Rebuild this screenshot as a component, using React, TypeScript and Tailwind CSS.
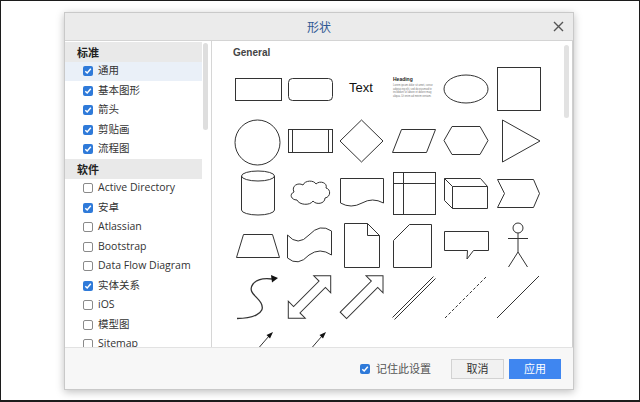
import React from 'react';

type Item = { label: string; checked?: boolean; header?: boolean; active?: boolean };

const items: Item[] = [
  { label: '标准', header: true },
  { label: '通用', checked: true, active: true },
  { label: '基本图形', checked: true },
  { label: '箭头', checked: true },
  { label: '剪贴画', checked: true },
  { label: '流程图', checked: true },
  { label: '软件', header: true },
  { label: 'Active Directory' },
  { label: '安卓', checked: true },
  { label: 'Atlassian' },
  { label: 'Bootstrap' },
  { label: 'Data Flow Diagram' },
  { label: '实体关系', checked: true },
  { label: 'iOS' },
  { label: '模型图' },
  { label: 'Sitemap' },
];

function Check({ checked }: { checked?: boolean }) {
  if (checked) {
    return (
      <span className="flex h-[10px] w-[10px] items-center justify-center rounded-[2px] bg-[#2f7ad9]">
        <svg width="8" height="8" viewBox="0 0 8 8">
          <path d="M1.3 4.2 L3.2 6 L6.8 1.8" fill="none" stroke="#fff" strokeWidth="1.5" />
        </svg>
      </span>
    );
  }
  return <span className="h-[10px] w-[10px] rounded-[2px] border border-[#8a8a8a] bg-white" />;
}

const S = { fill: '#fff', stroke: '#333', strokeWidth: 1 };

function Cell({ children }: { children?: React.ReactNode }) {
  return (
    <svg width="52" height="52" viewBox="0 0 52 52" className="overflow-visible">
      {children}
    </svg>
  );
}

const dbl = '-30,0 -18,-12 -18,-4.5 18,-4.5 18,-12 30,0 18,12 18,4.5 -18,4.5 -18,12';
const single = '-26,-4.5 18,-4.5 18,-12 30,0 18,12 18,4.5 -26,4.5';

function Shapes() {
  return (
    <div className="grid grid-cols-[repeat(6,52px)] auto-rows-[52px]">
      {/* row 1 */}
      <Cell><rect x="4.5" y="16.5" width="46" height="22" {...S} /></Cell>
      <Cell><rect x="5.5" y="16.5" width="44" height="22" rx="4" {...S} /></Cell>
      <div className="flex items-center justify-center pb-[1px] font-['Liberation_Sans',sans-serif] text-[13px] text-[#111]">Text</div>
      <Cell>
        <text x="6" y="19" fontSize="5" fontWeight="bold" fill="#222" fontFamily="Liberation Sans, sans-serif">Heading</text>
        <g fontSize="2.6" fill="#777" fontFamily="Liberation Sans, sans-serif">
          <text x="6" y="24">Lorem ipsum dolor sit amet, conse</text>
          <text x="6" y="27.5">adipisicing elit, sed do eiusmod te</text>
          <text x="6" y="31">incididunt ut labore et dolore mag</text>
          <text x="6" y="34.5">aliqua. Ut enim ad minim veniam.</text>
        </g>
      </Cell>
      <Cell><ellipse cx="27" cy="27" rx="22" ry="14" {...S} /></Cell>
      <Cell><rect x="6.5" y="5.5" width="43" height="43" {...S} /></Cell>

      {/* row 2 */}
      <Cell><circle cx="26.5" cy="28.5" r="22.5" {...S} /></Cell>
      <Cell>
        <rect x="5.5" y="15.5" width="44" height="23" {...S} />
        <path d="M9.5 15.5 V38.5 M45.5 15.5 V38.5" {...S} />
      </Cell>
      <Cell><polygon points="26.5,6 48,27 26.5,48 5,27" {...S} /></Cell>
      <Cell><polygon points="14.5,15.5 48.5,15.5 39.5,38.5 5.5,38.5" {...S} /></Cell>
      <Cell><polygon points="5,26.5 13,12.5 41,12.5 49,26.5 41,40.5 13,40.5" {...S} /></Cell>
      <Cell><polygon points="11.5,6 49,27 11.5,48" {...S} /></Cell>

      {/* row 3 */}
      <Cell>
        <path d="M10.5 10 A16.5 5 0 0 1 43.5 10 V44 A16.5 5 0 0 1 10.5 44 Z" {...S} />
        <path d="M10.5 10 A16.5 5 0 0 0 43.5 10" {...S} fill="none" />
      </Cell>
      <Cell>
        <path
          d="M14 34 C8 34 6 28 11 26 C8 20 15 16 20 19 C22 14 31 14 33 18 C37 14 45 17 43 22 C48 23 48 31 42 32 C42 38 33 39 30 35 C27 40 16 39 14 34 Z"
          {...S}
        />
      </Cell>
      <Cell><path d="M5.5 12.5 H48.5 V37 Q37.5 31 27 37 Q16 43 5.5 37 Z" {...S} /></Cell>
      <Cell>
        <rect x="6.5" y="6.5" width="42" height="42" {...S} />
        <path d="M16.5 6.5 V48.5 M6.5 17.5 H48.5" {...S} fill="none" />
      </Cell>
      <Cell>
        <polygon points="5.5,12.5 41.5,12.5 48.5,20.5 48.5,42.5 13.5,42.5 5.5,34.5" {...S} />
        <path d="M5.5 12.5 L13.5 20.5 H48.5 M13.5 20.5 V42.5" {...S} fill="none" />
      </Cell>
      <Cell><polygon points="6.5,13.5 42.5,13.5 48.5,27.5 42.5,41.5 6.5,41.5 13.5,27.5" {...S} /></Cell>

      {/* row 4 */}
      <Cell><polygon points="12.5,16.5 41.5,16.5 48.5,39.5 5.5,39.5" {...S} /></Cell>
      <Cell><path d="M4.5 17 Q15 29 26 17 Q37 5 48.5 13 V37 Q37 29 26 37 Q15 49 4.5 40 Z" {...S} /></Cell>
      <Cell>
        <polygon points="9.5,5.5 32.5,5.5 44.5,17.5 44.5,49.5 9.5,49.5" {...S} />
        <path d="M32.5 5.5 V17.5 H44.5" {...S} fill="none" />
      </Cell>
      <Cell><polygon points="22.5,6.5 44.5,6.5 44.5,49.5 6.5,49.5 6.5,22.5" {...S} /></Cell>
      <Cell><polygon points="5.5,13.5 49.5,13.5 49.5,32.5 34.5,32.5 28,41 28.5,32.5 5.5,32.5" {...S} /></Cell>
      <Cell>
        <circle cx="27" cy="10" r="5" {...S} />
        <path d="M27 15 V34 M17 20.5 H37 M27 34 L17.5 49 M27 34 L36.5 49" {...S} fill="none" />
      </Cell>

      {/* row 5 */}
      <Cell>
        <path d="M6 48.5 C20 48.5 36 44 30 33 C26 26 16 22 22 14 C26 9 33 8 41 9" {...S} fill="none" strokeWidth="1.3" />
        <polygon points="47,8 40,5 41,12.5" fill="#111" />
      </Cell>
      <Cell><polygon points={dbl} transform="translate(26.5 27) rotate(-45)" {...S} /></Cell>
      <Cell><polygon points={single} transform="translate(26.8 27) rotate(-45)" {...S} /></Cell>
      <Cell><path d="M5.5 47.5 L46.5 6.5 M7.5 49.5 L48.5 8.5" {...S} fill="none" /></Cell>
      <Cell><path d="M6 48 L47 7" {...S} fill="none" strokeDasharray="3 2" /></Cell>
      <Cell><path d="M6 48 L48 6" {...S} fill="none" /></Cell>

      {/* row 6 */}
      <Cell>
        <path d="M19 36 L38 14" {...S} fill="none" />
        <polygon points="42,10 35.5,13 39,16.5" fill="#111" />
      </Cell>
      <Cell>
        <path d="M20 36 L39 14" {...S} fill="none" />
        <polygon points="43,10 36.5,13 40,16.5" fill="#111" />
      </Cell>
    </div>
  );
}

export default function App() {
  return (
    <div className="h-[402px] w-[640px] overflow-hidden border border-b-2 border-[#1c1c1c] bg-white pl-[63px] pt-[11px] font-['Open_Sans','Noto_Sans_CJK_SC',sans-serif]">
      <div className="flex h-[378px] w-[510px] flex-col border border-[#c9c9c9] bg-[#f6f6f6] shadow-[0_2px_8px_rgba(0,0,0,0.25)]">
        {/* title bar */}
        <div className="relative flex h-[28px] shrink-0 items-center justify-center border-b border-[#d4d4d4] bg-[#ebebeb]">
          <span className="font-['Noto_Sans_CJK_SC',sans-serif] text-[12px] text-[#2f5893]">形状</span>
          <svg className="absolute right-[9px] top-[8px]" width="11" height="11" viewBox="0 0 11 11">
            <path d="M1 1 L10 10 M10 1 L1 10" stroke="#555" strokeWidth="1.4" />
          </svg>
        </div>

        {/* body */}
        <div className="flex h-[306px] shrink-0">
          <div className="flex w-[147px] shrink-0 border-r border-[#d6d6d6] bg-white">
            <div className="w-[137px] overflow-hidden pt-[1px]">
              {items.map((it) =>
                it.header ? (
                  <div
                    key={it.label}
                    className="flex h-[19.5px] items-center bg-[#e9e9e9] pl-[12px] font-['Noto_Sans_CJK_SC',sans-serif] text-[11px] font-bold text-[#222]"
                  >
                    {it.label}
                  </div>
                ) : (
                  <div
                    key={it.label}
                    className={`flex h-[19.5px] items-center gap-[5px] pl-[18px] text-[10.5px] text-[#333] ${it.active ? 'bg-[#eaf0f8]' : ''}`}
                  >
                    <Check checked={it.checked} />
                    <span>{it.label}</span>
                  </div>
                )
              )}
            </div>
            <div className="w-[9px] pl-[1px] pt-[2px]">
              <div className="h-[87px] w-[5px] rounded-full bg-[#dedede]" />
            </div>
          </div>

          <div className="flex flex-1 overflow-hidden border-r border-[#cfcfcf] bg-white">
            <div className="flex-1 overflow-hidden pl-[19px] pt-[6px]">
              <div className="h-[12px] pl-[2px] font-['Liberation_Sans',sans-serif] text-[10px] leading-[12px] font-bold text-[#444]">General</div>
              <div className="mt-[3px]">
                <Shapes />
              </div>
            </div>
            <div className="w-[9px] pl-[1px] pt-[4px]">
              <div className="h-[73px] w-[5px] rounded-full bg-[#e2e2e2]" />
            </div>
          </div>
        </div>

        {/* footer */}
        <div className="flex flex-1 items-center justify-end gap-[5px] border-t border-[#e2e2e2] bg-[#f7f7f7] pr-[12px] font-['Noto_Sans_CJK_SC',sans-serif] text-[11px]">
          <div className="mr-[15px] flex items-center gap-[6px] text-[#555]">
            <Check checked />
            <span>记住此设置</span>
          </div>
          <button className="h-[20px] w-[53px] border border-[#d2d2d2] bg-[#f1f1f1] text-[#333]">取消</button>
          <button className="h-[20px] w-[52px] bg-[#3f86f0] text-white">应用</button>
        </div>
      </div>
    </div>
  );
}
